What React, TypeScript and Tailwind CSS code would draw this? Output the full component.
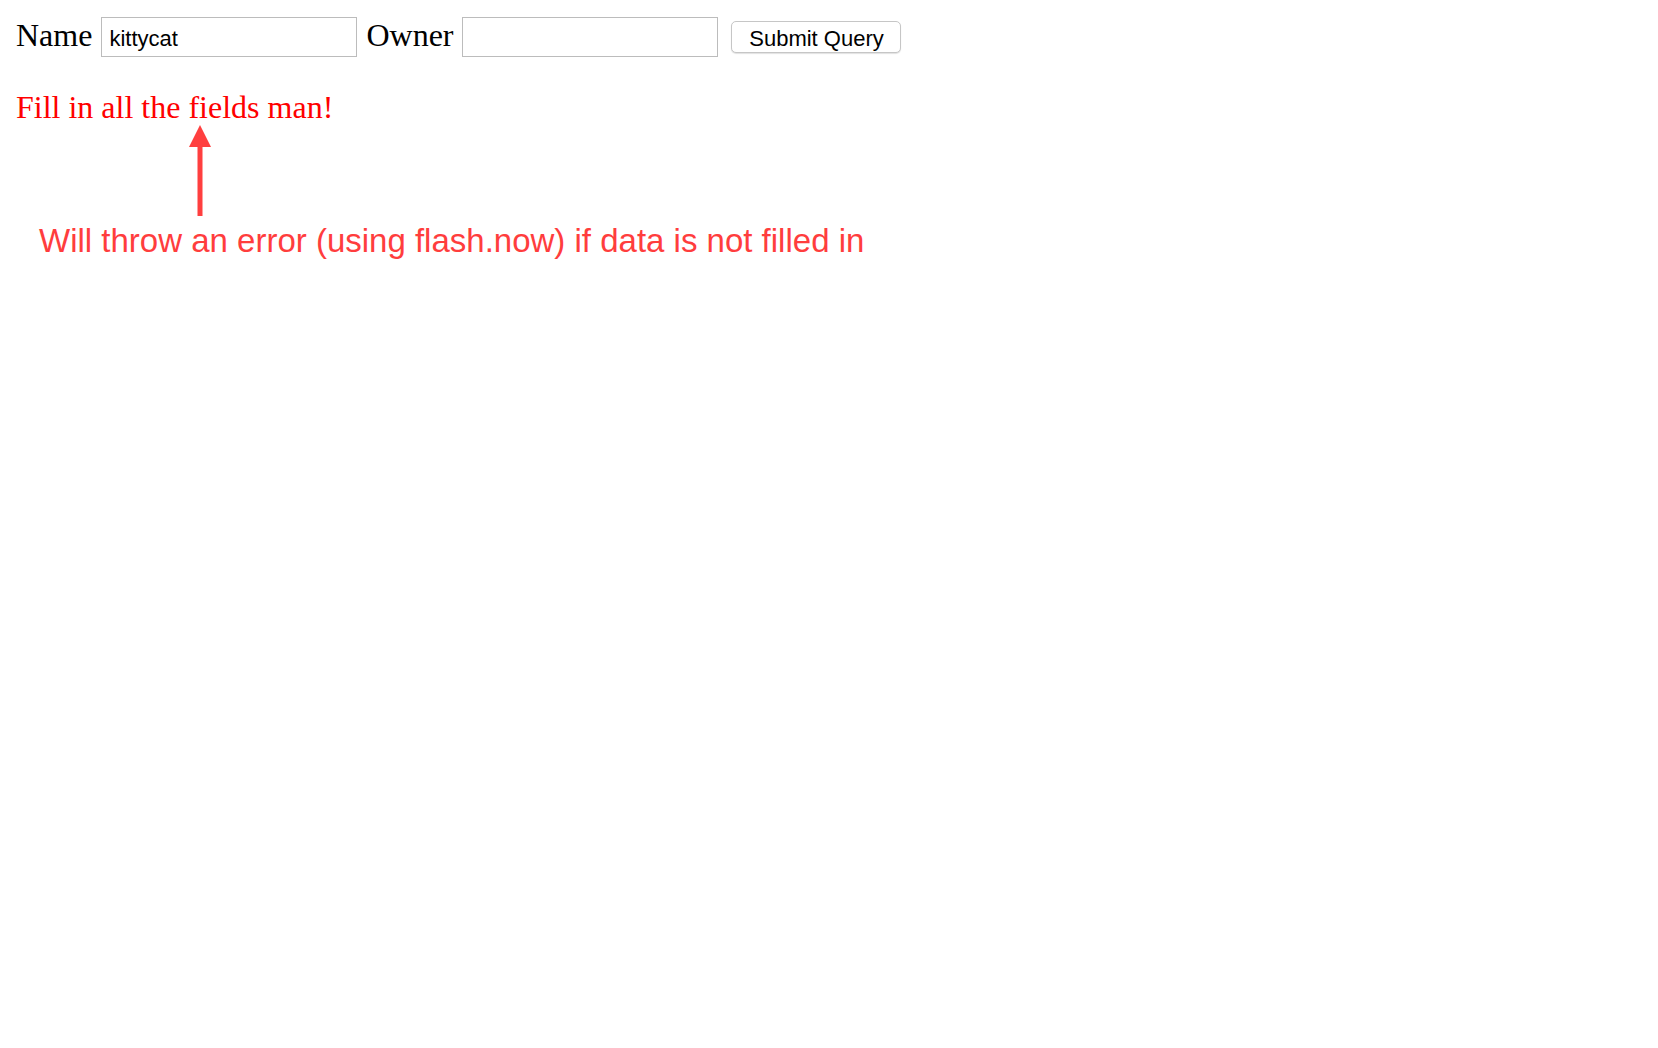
import { useState } from "react";

export default function App() {
  const [name, setName] = useState("kittycat");
  const [owner, setOwner] = useState("");

  return (
    <div className="min-h-screen bg-white px-4 font-['Liberation_Serif',serif] text-black">
      <form
        className="flex items-start pt-[17px]"
        onSubmit={(e) => e.preventDefault()}
      >
        <label className="text-[32px] leading-[36px]">Name</label>
        <input
          value={name}
          onChange={(e) => setName(e.target.value)}
          className="ml-[9px] h-[40px] w-[256px] border border-[#bcbcbc] bg-white pl-[7px] pt-[3px] font-['Liberation_Sans',Arial,sans-serif] text-[22px] text-black outline-none"
        />
        <label className="ml-[9px] text-[32px] leading-[36px]">Owner</label>
        <input
          value={owner}
          onChange={(e) => setOwner(e.target.value)}
          className="ml-[9px] h-[40px] w-[256px] border border-[#bcbcbc] bg-white pl-[7px] pt-[3px] font-['Liberation_Sans',Arial,sans-serif] text-[22px] text-black outline-none"
        />
        <button
          type="submit"
          className="ml-[13px] mt-[4px] flex h-[32px] w-[170px] items-center justify-center rounded-[5px] border border-[#c6c6c6] bg-white pt-[2px] font-['Liberation_Sans',Arial,sans-serif] text-[22px] text-black shadow-[0_1px_1px_rgba(0,0,0,0.12)]"
        >
          Submit Query
        </button>
      </form>

      <p className="mt-[32px] text-[32px] leading-[36px] text-[#ff0000]">
        Fill in all the fields man!
      </p>

      {/* annotation arrow */}
      <svg
        width="24"
        height="91"
        viewBox="0 0 24 91"
        className="ml-[172px] block"
      >
        <polygon points="12,0 1,22 23,22" fill="#ff3f3f" />
        <rect x="9.5" y="20" width="5" height="71" fill="#ff3f3f" />
      </svg>

      <p className="ml-[23px] mt-[6px] font-['Liberation_Sans',Arial,sans-serif] text-[33px] leading-[38px] text-[#ff3d3d]">
        Will throw an error (using flash.now) if data is not filled in
      </p>
    </div>
  );
}
